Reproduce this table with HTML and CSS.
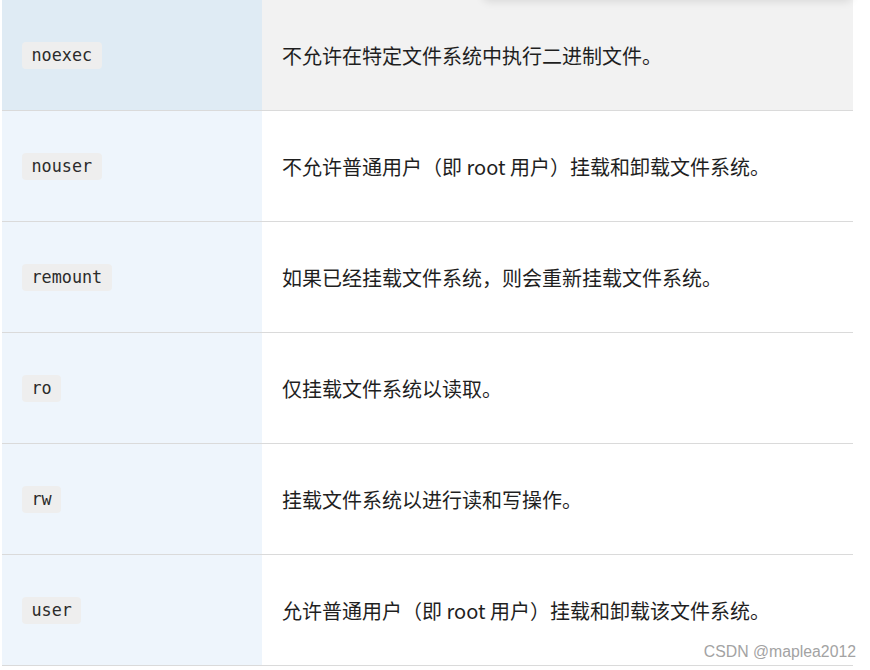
FILE: index.html
```html
<!DOCTYPE html>
<html lang="zh">
<head>
<meta charset="utf-8">
<title>mount options</title>
<link rel="stylesheet" href="styles.css">
</head>
<body>
<div class="page">
  <div class="overlay-shadow"></div>
  <div class="table">
    <div class="row row-active">
      <div class="cell cell-key"><code class="code">noexec</code></div>
      <div class="cell cell-desc">不允许在特定文件系统中执行二进制文件。</div>
    </div>
    <div class="row">
      <div class="cell cell-key"><code class="code">nouser</code></div>
      <div class="cell cell-desc">不允许普通用户（即 root 用户）挂载和卸载文件系统。</div>
    </div>
    <div class="row">
      <div class="cell cell-key"><code class="code">remount</code></div>
      <div class="cell cell-desc">如果已经挂载文件系统，则会重新挂载文件系统。</div>
    </div>
    <div class="row">
      <div class="cell cell-key"><code class="code">ro</code></div>
      <div class="cell cell-desc">仅挂载文件系统以读取。</div>
    </div>
    <div class="row">
      <div class="cell cell-key"><code class="code">rw</code></div>
      <div class="cell cell-desc">挂载文件系统以进行读和写操作。</div>
    </div>
    <div class="row">
      <div class="cell cell-key"><code class="code">user</code></div>
      <div class="cell cell-desc">允许普通用户（即 root 用户）挂载和卸载该文件系统。</div>
    </div>
  </div>
  <div class="watermark">CSDN @maplea2012</div>
</div>
</body>
</html>
```
FILE: styles.css
```css
html, body {
  margin: 0;
  padding: 0;
  background: #ffffff;
}

.page {
  position: relative;
  width: 870px;
  height: 670px;
  overflow: hidden;
  font-family: "Noto Sans CJK SC", "Noto Sans", sans-serif;
  color: #222222;
}

.table {
  margin-left: 2px;
  width: 851px;
  display: flex;
  flex-direction: column;
}

.row {
  display: grid;
  grid-template-columns: 260px 1fr;
  height: 110px;
  border-bottom: 1px solid #dadada;
}

.cell {
  display: flex;
  align-items: center;
  padding: 1px 20px 0;
}

.cell-key {
  background: #eef5fc;
}

.cell-desc {
  background: #ffffff;
  font-size: 20px;
  line-height: 28px;
  color: #1f1f1f;
}

.row-active .cell-key {
  background: #dfebf4;
}

.row-active .cell-desc {
  background: #f2f2f2;
}

.code {
  display: inline-block;
  height: 27px;
  line-height: 27px;
  padding: 0 9.5px;
  border-radius: 4px;
  background: #eeeeee;
  font-family: "DejaVu Sans Mono", "Liberation Mono", monospace;
  font-size: 16.8px;
  color: #2b2b2b;
}

.overlay-shadow {
  position: absolute;
  top: -40px;
  left: 482px;
  width: 371px;
  height: 40px;
  background: #f2f2f2;
  box-shadow: 0 2px 8px rgba(0, 0, 0, 0.10);
  border-radius: 0 0 8px 8px;
  z-index: 2;
}

.watermark {
  position: absolute;
  right: 14px;
  top: 642px;
  font-family: "Liberation Sans", Arial, sans-serif;
  font-size: 15.8px;
  line-height: 20px;
  color: #a3a3a3;
  text-shadow: 0 0 1px #ffffff;
  z-index: 3;
}
```
